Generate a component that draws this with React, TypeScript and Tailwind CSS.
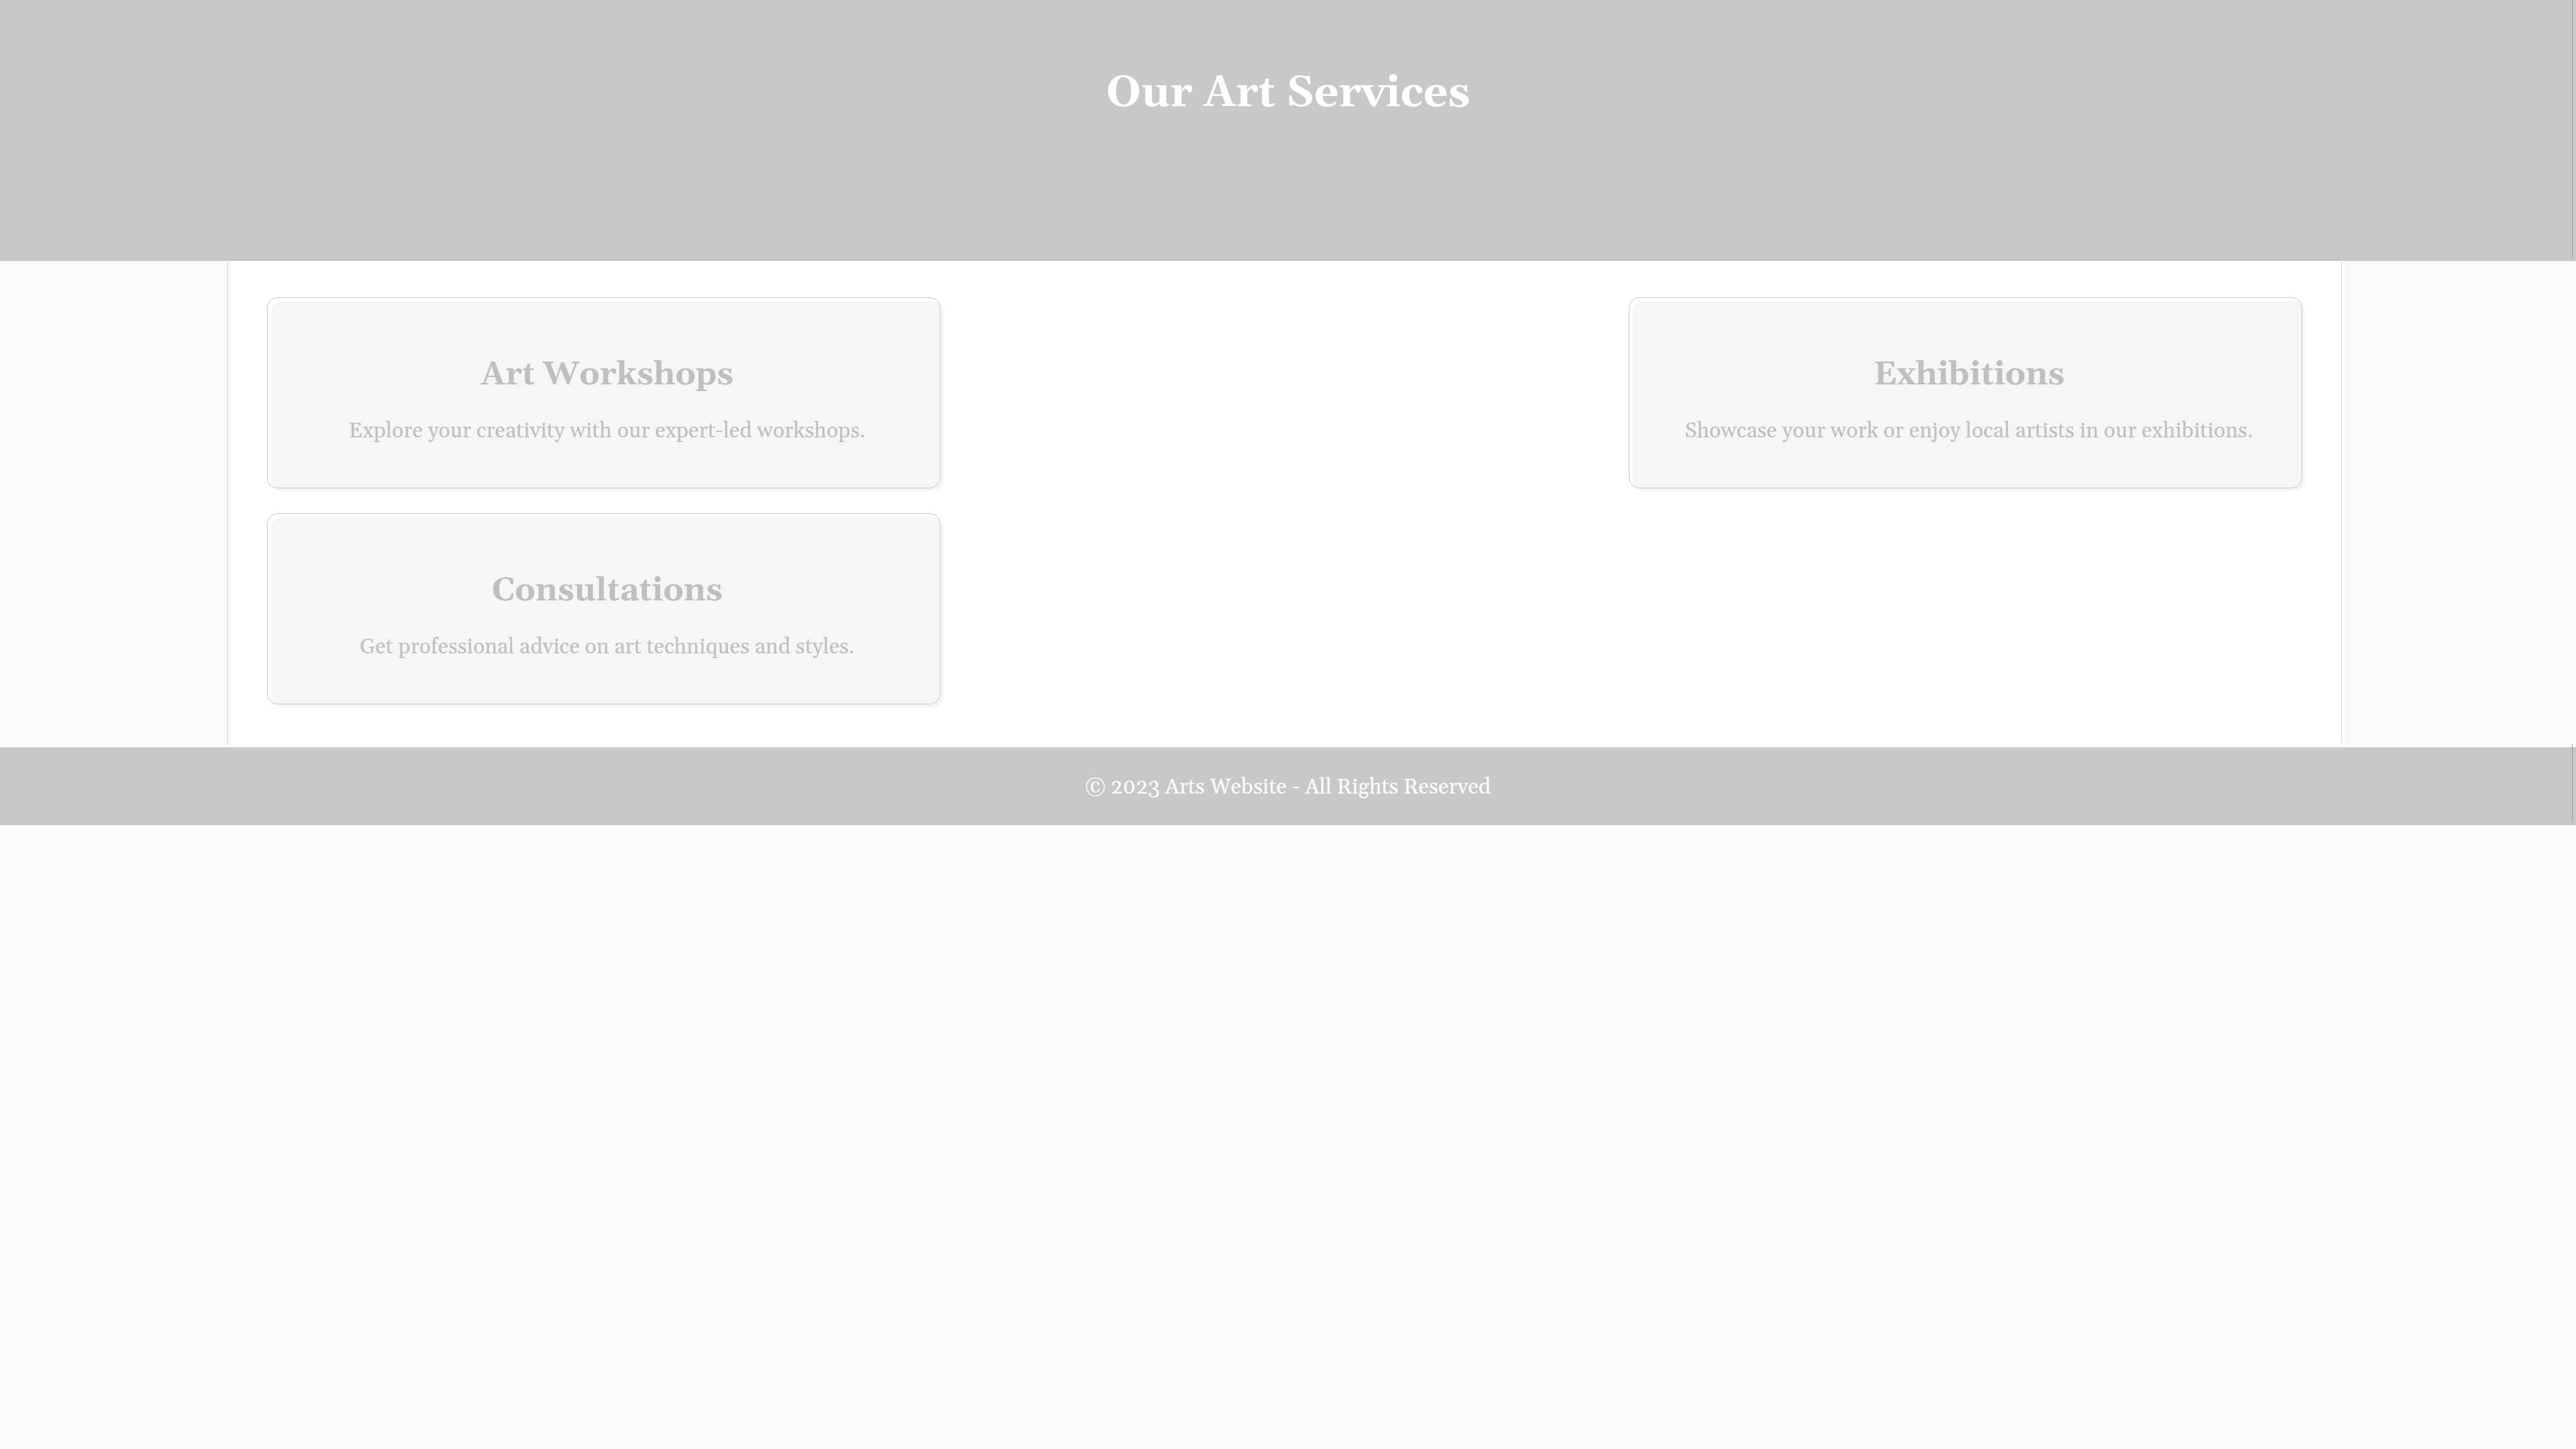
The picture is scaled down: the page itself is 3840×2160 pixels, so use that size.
const services = [
  {
    title: 'Art Workshops',
    text: 'Explore your creativity with our expert-led workshops.',
    place: 'col-start-1',
  },
  {
    title: 'Exhibitions',
    text: 'Showcase your work or enjoy local artists in our exhibitions.',
    place: 'col-start-3',
  },
  {
    title: 'Consultations',
    text: 'Get professional advice on art techniques and styles.',
    place: 'col-start-1',
  },
];

export default function App() {
  return (
    <div className="min-h-screen bg-[#fbfbfb] font-[Georgia,Gelasio,'Liberation_Serif',serif] text-[32px] text-[#bfbfbf]">
      <header className="relative bg-[#c8c8c8] pt-[100px] pb-[209px] text-center text-white">
        <h1 className="text-[64px] leading-[80px] font-bold">Our Art Services</h1>
        <span className="absolute top-0 right-[5px] bottom-[5px] w-px bg-[#969696]" />
      </header>

      <main className="relative mx-auto w-full max-w-[3152px] bg-white p-[60px] shadow-[0_0_20px_rgba(0,0,0,0.03)]">
        <span className="absolute -top-1 bottom-1.5 -left-[5px] w-px bg-[#d0d0d0]" />
        <span className="absolute -top-1 right-[5px] bottom-1.5 w-px bg-[#d8d8d8]" />
        <div className="grid grid-cols-3 gap-x-[13px] gap-y-[39px]">
          {services.map((s) => (
            <section
              key={s.title}
              className={`relative rounded-2xl bg-[#f6f6f6] px-10 pt-[78px] pb-[63px] text-center ${s.place}`}
            >
              <span className="absolute -top-1.5 right-1 bottom-1 -left-1.5 rounded-2xl border border-[#c8c8c8]" />
              <h2 className="text-[48px] leading-[64px] font-bold">{s.title}</h2>
              <p className="mt-[26px] leading-[52px]">{s.text}</p>
            </section>
          ))}
        </div>
      </main>

      <footer className="relative bg-[#c8c8c8] pt-[34px] pb-[30px] text-center text-white">
        <p className="leading-[52px]">© 2023 Arts Website - All Rights Reserved</p>
        <span className="absolute -top-[5px] right-[5px] bottom-[5px] w-px bg-[#969696]" />
      </footer>
    </div>
  );
}
